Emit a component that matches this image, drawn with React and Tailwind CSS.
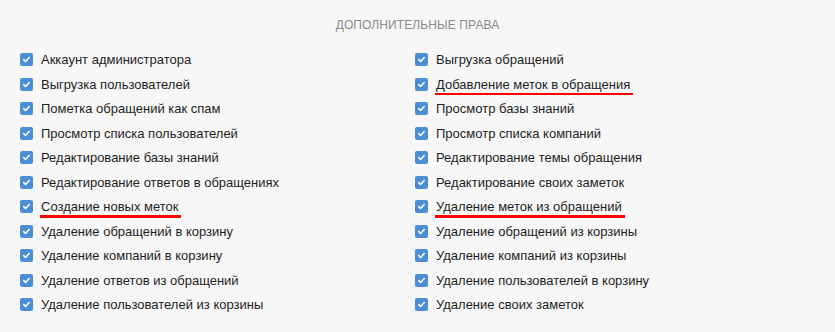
const left = [
  { t: 'Аккаунт администратора' },
  { t: 'Выгрузка пользователей' },
  { t: 'Пометка обращений как спам' },
  { t: 'Просмотр списка пользователей' },
  { t: 'Редактирование базы знаний' },
  { t: 'Редактирование ответов в обращениях' },
  { t: 'Создание новых меток', mark: true },
  { t: 'Удаление обращений в корзину' },
  { t: 'Удаление компаний в корзину' },
  { t: 'Удаление ответов из обращений' },
  { t: 'Удаление пользователей из корзины' },
]

const right = [
  { t: 'Выгрузка обращений' },
  { t: 'Добавление меток в обращения', mark: true },
  { t: 'Просмотр базы знаний' },
  { t: 'Просмотр списка компаний' },
  { t: 'Редактирование темы обращения' },
  { t: 'Редактирование своих заметок' },
  { t: 'Удаление меток из обращений', mark: true },
  { t: 'Удаление обращений из корзины' },
  { t: 'Удаление компаний из корзины' },
  { t: 'Удаление пользователей в корзину' },
  { t: 'Удаление своих заметок' },
]

function Check() {
  return (
    <span className="flex h-[13px] w-[13px] shrink-0 items-center justify-center rounded-[2px] bg-[#4a8fd5]">
      <svg width="9" height="9" viewBox="0 0 10 10" fill="none">
        <path d="M2 5.2l2 2 4-4.4" stroke="white" strokeWidth="1.8" strokeLinecap="round" strokeLinejoin="round" />
      </svg>
    </span>
  )
}

function Item({ t, mark }) {
  return (
    <div className="flex h-[24.5px] items-center gap-[8px]">
      <Check />
      {mark ? (
        <span className="relative">
          {t}
          <span className="absolute -left-[1px] -right-[3px] top-[18px] h-[2.5px] bg-[#ff0000]"></span>
        </span>
      ) : (
        <span>{t}</span>
      )}
    </div>
  )
}

export default function App() {
  return (
    <div className="min-h-[332px] w-[835px] bg-[#f7f7f7] pt-[18px] font-['Liberation_Sans',Arial,sans-serif] text-[13px] text-[#1e1e1e]">
      <h2 className="text-center text-[12px] leading-[14px] uppercase tracking-[0.1px] text-[#8a8a8a]">
        Дополнительные права
      </h2>
      <div className="mt-[15.5px] grid grid-cols-[395px_1fr] pl-[20px]">
        <div>
          {left.map((r) => (
            <Item key={r.t} {...r} />
          ))}
        </div>
        <div>
          {right.map((r) => (
            <Item key={r.t} {...r} />
          ))}
        </div>
      </div>
    </div>
  )
}
